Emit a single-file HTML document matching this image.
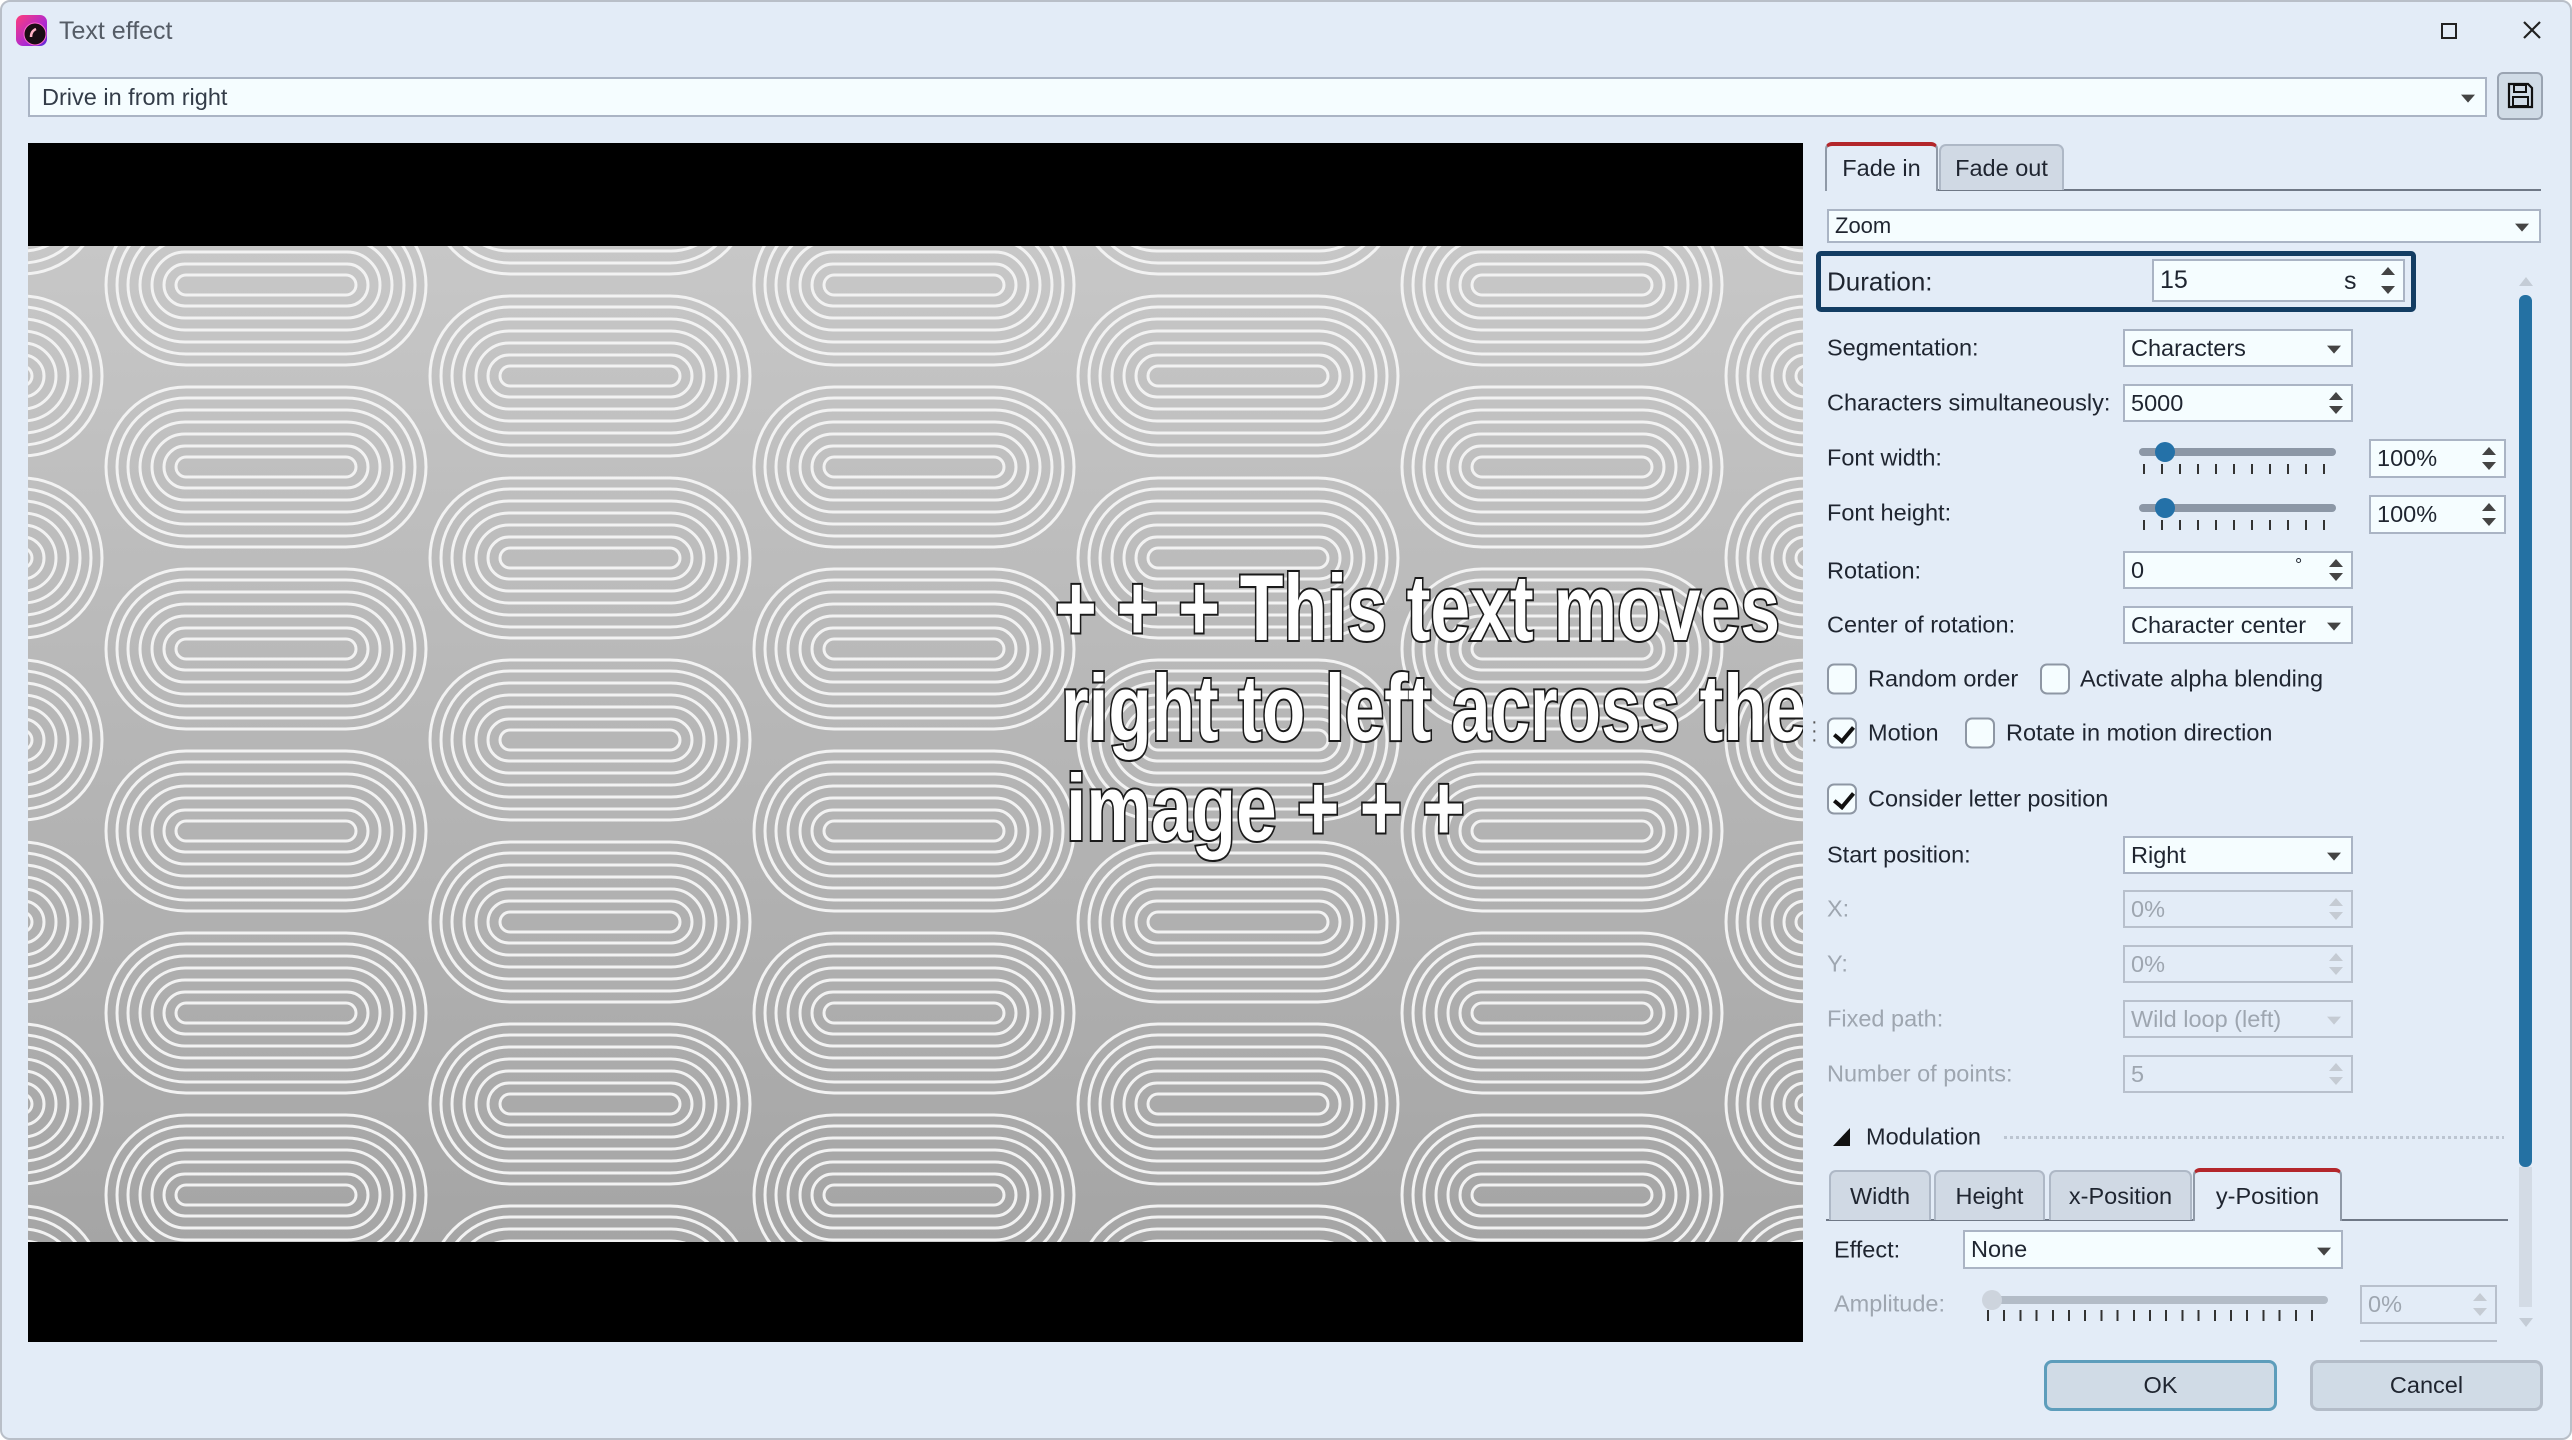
<!DOCTYPE html>
<html><head><meta charset="utf-8">
<style>
*{box-sizing:border-box;margin:0;padding:0}
html,body{width:2572px;height:1440px;overflow:hidden;background:#fff}
body{font-family:"Liberation Sans",sans-serif;color:#1f2530;position:relative}
.win{position:absolute;left:0;top:0;width:2572px;height:1440px;background:#e3ecf7;border:2px solid #b9bfc8;border-radius:10px}
.a{position:absolute}
.lbl{position:absolute;font-size:23.5px;color:#1f2530;white-space:nowrap;transform:translateY(-50%)}
.dis{color:#9ea6b0}
.box{position:absolute;background:#f5fdff;border:2px solid #aab4c4;font-size:23.5px;padding-left:6px;display:flex;align-items:center;white-space:nowrap}
.box.d{background:#e3ecf7;color:#9ea6b0;border-color:#b8c0cc}
.arr{position:absolute;right:10px;top:50%;width:0;height:0;border-left:7px solid transparent;border-right:7px solid transparent;border-top:8px solid #444;transform:translateY(-30%)}
.d .arr{border-top-color:#c5cbd3}
.spin{position:absolute;right:8px;top:5px;bottom:5px;width:14px}
.spin:before{content:"";position:absolute;top:1px;left:0;border-left:7px solid transparent;border-right:7px solid transparent;border-bottom:8px solid #444}
.spin:after{content:"";position:absolute;bottom:1px;left:0;border-left:7px solid transparent;border-right:7px solid transparent;border-top:8px solid #444}
.d .spin:before{border-bottom-color:#c5cbd3}.d .spin:after{border-top-color:#c5cbd3}
.cb{position:absolute;width:30px;height:31px;border:2px solid #8e97a4;border-radius:7px;background:#f5fdff;transform:translateY(-50%)}
.cb.on:after{content:"";position:absolute;left:9px;top:3px;width:8px;height:16px;border-right:4px solid #111;border-bottom:4px solid #111;transform:rotate(40deg)}
.tab{position:absolute;background:#d0d9e4;border:2px solid #aeb8c6;border-bottom:none;border-radius:7px 7px 0 0;font-size:23.5px;display:flex;align-items:center;justify-content:center;color:#1f2530}
.tab.act{background:#e3ecf7;border-top:4px solid #b3262b;border-color:#8f99a7;border-top-color:#b3262b}
.track{position:absolute;height:8px;background:#8c97a6;border-radius:4px}
.knob{position:absolute;width:20px;height:20px;border-radius:50%;background:#2471a8}
.ticks{position:absolute;height:10px;background:repeating-linear-gradient(90deg,#333 0 2px,transparent 2px var(--s))}
.btn{position:absolute;background:#d0dbe6;border:3px solid #b3bcc8;border-radius:8px;font-size:23.5px;display:flex;align-items:center;justify-content:center}
</style></head><body>
<div class="win"></div>

<svg class="a" style="left:16px;top:15px" width="31" height="31" viewBox="0 0 31 31">
<defs><linearGradient id="ig" x1="0" y1="0" x2="1" y2="1"><stop offset="0" stop-color="#ff3d7a"/><stop offset=".6" stop-color="#b02ad0"/><stop offset="1" stop-color="#5a2bd6"/></linearGradient></defs>
<rect x="0" y="0" width="31" height="31" rx="7" fill="url(#ig)"/>
<circle cx="19" cy="19" r="11" fill="#1a0d14" stroke="#f6c" stroke-width="1"/>
<path d="M15 22 Q15 16 20 14" stroke="#ffb3c6" stroke-width="2.5" fill="none"/>
</svg>
<div class="a" style="left:59px;top:17px;font-size:25px;color:#555c66">Text effect</div>
<div class="a" style="left:2441px;top:23px;width:16px;height:16px;border:2px solid #222"></div>
<svg class="a" style="left:2523px;top:21px" width="18" height="18"><path d="M1 1L17 17M17 1L1 17" stroke="#222" stroke-width="2.2"/></svg>

<div class="box" style="left:28px;top:77px;width:2459px;height:40px;padding-left:12px;color:#333c48">Drive in from right<div class="arr"></div></div>
<div class="a" style="left:2497px;top:72px;width:46px;height:48px;background:#d0dbe6;border:2px solid #9aa4b2;border-radius:6px"></div>
<svg class="a" style="left:2507px;top:82px" width="27" height="27" viewBox="0 0 27 27"><path d="M2 2H21L25 6V25H2Z" fill="none" stroke="#111" stroke-width="2.2"/><rect x="7" y="3" width="12" height="7" fill="none" stroke="#111" stroke-width="2"/><rect x="6" y="15" width="15" height="9" fill="none" stroke="#111" stroke-width="2"/></svg>

<svg class="a" style="left:28px;top:143px" width="1775" height="1199" viewBox="0 0 1775 1199">
<defs>
<linearGradient id="bg" x1="0" y1="0" x2="0" y2="1"><stop offset="0" stop-color="#c7c7c7"/><stop offset="1" stop-color="#a5a5a5"/></linearGradient>
<g id="pill" fill="none" stroke="#f2f2f2" stroke-width="3">
<rect x="-160" y="-80" width="320" height="160" rx="80"/>
<rect x="-149" y="-69" width="298" height="138" rx="69"/>
<rect x="-138" y="-57" width="276" height="114" rx="57"/>
<rect x="-126" y="-45" width="252" height="90" rx="45"/>
<rect x="-114" y="-33" width="228" height="66" rx="33"/>
<rect x="-102" y="-21" width="204" height="42" rx="21"/>
<rect x="-90" y="-10" width="180" height="20" rx="10"/>
</g>
<pattern id="pat" patternUnits="userSpaceOnUse" x="76" y="51" width="648" height="182">
<use href="#pill" x="162" y="91"/>
<use href="#pill" x="486" y="0"/>
<use href="#pill" x="486" y="182"/>
<use href="#pill" x="-162" y="0"/>
<use href="#pill" x="-162" y="182"/>
<use href="#pill" x="810" y="91"/>
</pattern>
</defs>
<rect width="1775" height="1199" fill="#000"/>
<rect y="103" width="1775" height="996" fill="url(#bg)"/>
<rect y="103" width="1775" height="996" fill="url(#pat)"/>
<g font-family="Liberation Sans, sans-serif" font-weight="bold" font-size="94" fill="#fff" stroke="#1a1a1a" stroke-width="4" paint-order="stroke">
<text x="1027" y="497" textLength="725" lengthAdjust="spacingAndGlyphs">+ + + This text moves</text>
<text x="1033" y="597" textLength="745" lengthAdjust="spacingAndGlyphs">right to left across the</text>
<text x="1038" y="697" textLength="399" lengthAdjust="spacingAndGlyphs">image + + +</text>
</g>
</svg>
<div class="a" style="left:1811px;top:718px;font-size:20px;color:#555;line-height:9px">·<br>·<br>·</div>

<div class="a" style="left:1826px;top:189px;width:715px;height:2px;background:#6f7886"></div>
<div class="tab act" style="left:1825px;top:142px;width:113px;height:49px">Fade in</div>
<div class="tab" style="left:1939px;top:144px;width:125px;height:46px">Fade out</div>
<div class="box" style="left:1827px;top:209px;width:714px;height:34px;font-size:22px">Zoom<div class="arr"></div></div>

<div class="a" style="left:1816px;top:251px;width:600px;height:61px;border:5px solid #133d63;border-radius:5px"></div>
<div class="lbl" style="left:1827px;top:282px;font-size:26px">Duration:</div>
<div class="box" style="left:2152px;top:259px;width:253px;height:43px;font-size:25px">15<span class="a" style="left:190px;top:6px">s</span><div class="spin"></div></div>

<div class="a" style="left:2519px;top:277px;width:0;height:0;border-left:7px solid transparent;border-right:7px solid transparent;border-bottom:9px solid #c4ccd6"></div>
<div class="a" style="left:2519px;top:295px;width:13px;height:872px;background:#2471a3;border-radius:6px"></div>
<div class="a" style="left:2519px;top:1167px;width:13px;height:140px;background:#d3dbe5"></div>
<div class="a" style="left:2519px;top:1318px;width:0;height:0;border-left:7px solid transparent;border-right:7px solid transparent;border-top:9px solid #c4ccd6"></div>

<div class="lbl" style="left:1827px;top:348px">Segmentation:</div>
<div class="box" style="left:2123px;top:329px;width:230px;height:38px">Characters<div class="arr"></div></div>
<div class="lbl" style="left:1827px;top:403px">Characters simultaneously:</div>
<div class="box" style="left:2123px;top:384px;width:230px;height:38px">5000<div class="spin"></div></div>

<div class="lbl" style="left:1827px;top:458px">Font width:</div>
<div class="track" style="left:2139px;top:448px;width:197px"></div>
<div class="knob" style="left:2155px;top:442px"></div>
<div class="ticks" style="--s:18px;left:2143px;top:464px;width:182px"></div>
<div class="box" style="left:2369px;top:439px;width:137px;height:39px">100%<div class="spin"></div></div>

<div class="lbl" style="left:1827px;top:513px">Font height:</div>
<div class="track" style="left:2139px;top:504px;width:197px"></div>
<div class="knob" style="left:2155px;top:498px"></div>
<div class="ticks" style="--s:18px;left:2143px;top:520px;width:182px"></div>
<div class="box" style="left:2369px;top:495px;width:137px;height:39px">100%<div class="spin"></div></div>

<div class="lbl" style="left:1827px;top:571px">Rotation:</div>
<div class="box" style="left:2123px;top:551px;width:230px;height:38px">0<span class="a" style="left:170px;top:2px;font-size:18px">°</span><div class="spin"></div></div>
<div class="lbl" style="left:1827px;top:625px">Center of rotation:</div>
<div class="box" style="left:2123px;top:606px;width:230px;height:38px">Character center<div class="arr"></div></div>

<div class="cb" style="left:1827px;top:679px"></div><div class="lbl" style="left:1868px;top:679px">Random order</div>
<div class="cb" style="left:2040px;top:679px"></div><div class="lbl" style="left:2080px;top:679px">Activate alpha blending</div>
<div class="cb on" style="left:1827px;top:733px"></div><div class="lbl" style="left:1868px;top:733px">Motion</div>
<div class="cb" style="left:1965px;top:733px"></div><div class="lbl" style="left:2006px;top:733px">Rotate in motion direction</div>
<div class="cb on" style="left:1827px;top:799px"></div><div class="lbl" style="left:1868px;top:799px">Consider letter position</div>

<div class="lbl" style="left:1827px;top:855px">Start position:</div>
<div class="box" style="left:2123px;top:836px;width:230px;height:38px">Right<div class="arr"></div></div>
<div class="lbl dis" style="left:1827px;top:909px">X:</div>
<div class="box d" style="left:2123px;top:890px;width:230px;height:38px">0%<div class="spin"></div></div>
<div class="lbl dis" style="left:1827px;top:964px">Y:</div>
<div class="box d" style="left:2123px;top:945px;width:230px;height:38px">0%<div class="spin"></div></div>
<div class="lbl dis" style="left:1827px;top:1019px">Fixed path:</div>
<div class="box d" style="left:2123px;top:1000px;width:230px;height:38px">Wild loop (left)<div class="arr"></div></div>
<div class="lbl dis" style="left:1827px;top:1074px">Number of points:</div>
<div class="box d" style="left:2123px;top:1055px;width:230px;height:38px">5<div class="spin"></div></div>

<svg class="a" style="left:1833px;top:1128px" width="18" height="18"><path d="M17 0V18H0Z" fill="#111"/></svg>
<div class="lbl" style="left:1866px;top:1137px">Modulation</div>
<div class="a" style="left:2004px;top:1136px;width:500px;height:3px;background:repeating-linear-gradient(90deg,#bcc5d1 0 3px,transparent 3px 6px)"></div>

<div class="a" style="left:1826px;top:1219px;width:682px;height:2px;background:#6f7886"></div>
<div class="tab" style="left:1829px;top:1170px;width:102px;height:50px">Width</div>
<div class="tab" style="left:1934px;top:1170px;width:111px;height:50px">Height</div>
<div class="tab" style="left:2049px;top:1170px;width:143px;height:50px">x-Position</div>
<div class="tab act" style="left:2193px;top:1168px;width:149px;height:53px">y-Position</div>

<div class="lbl" style="left:1834px;top:1250px">Effect:</div>
<div class="box" style="left:1963px;top:1230px;width:380px;height:39px">None<div class="arr"></div></div>
<div class="lbl dis" style="left:1834px;top:1304px">Amplitude:</div>
<div class="track" style="left:1984px;top:1296px;width:344px;background:#b3bcc7"></div>
<div class="knob" style="left:1982px;top:1290px;background:#cdd4dd"></div>
<div class="ticks" style="--s:16.2px;left:1987px;top:1310px;width:330px;height:11px"></div>
<div class="box d" style="left:2360px;top:1285px;width:137px;height:39px">0%<div class="spin"></div></div>
<div class="a" style="left:2360px;top:1340px;width:137px;height:2px;background:#b8c0cc"></div>

<div class="btn" style="left:2044px;top:1360px;width:233px;height:51px;border-color:#5d9dbb">OK</div>
<div class="btn" style="left:2310px;top:1360px;width:233px;height:51px">Cancel</div>
</body></html>
